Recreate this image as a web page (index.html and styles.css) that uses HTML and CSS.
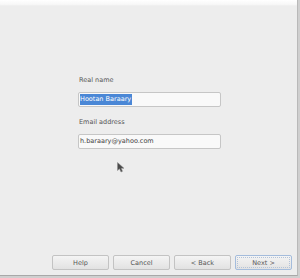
FILE: index.html
```html
<!DOCTYPE html>
<html lang="en">
<head>
  <meta charset="UTF-8" />
  <title>Account setup</title>
  <link rel="stylesheet" href="styles.css">
</head>
<body>
  <div class="window">
    <div class="titlebar"></div>

    <div class="content">
      <div class="form">
        <div class="label">Real name</div>
        <div class="field"><span class="selected">Hootan Baraary</span></div>

        <div class="label">Email address</div>
        <div class="field">h.baraary@yahoo.com</div>
      </div>
    </div>

    <div class="buttons">
      <button class="btn">Help</button>
      <button class="btn">Cancel</button>
      <button class="btn">&lt; Back</button>
      <button class="btn default"><span class="focus">Next &gt;</span></button>
    </div>
  </div>

  <!-- mouse pointer over the dialog -->
  <svg class="pointer" width="8" height="11" viewBox="0 0 8 11">
    <path d="M0.5 0.5 L0.5 8.5 L2.5 6.8 L4 10 L5.5 9.3 L4.2 6.3 L7 6.3 Z" fill="#4a4a4a" stroke="#888" stroke-width="0.5"/>
  </svg>
</body>
</html>
```

FILE: styles.css
```css
* {
  box-sizing: border-box;
  margin: 0;
  padding: 0;
}
body {
  width: 300px;
  height: 278px;
  background-color: #cfcfcf;
  font-family: 'DejaVu Sans', Verdana, sans-serif;
  color: #3c3c3c;
  position: relative;
  overflow: hidden;
}
.window {
  width: 298px;
  height: 276px;
  background-color: #ededed;
  border-right: 1px solid #b9b9b9;
  border-bottom: 1px solid #a8a8a8;
  display: flex;
  flex-direction: column;
}
.titlebar {
  height: 6px;
  background: linear-gradient(#ffffff, #f6f6f6);
  border-bottom: 1px solid #f0f0f0;
}
.content {
  flex: 1;
}
.form {
  padding: 67px 0 0 78px;
}
.label {
  height: 10px;
  line-height: 10px;
  font-size: 6.5px;
  padding: 2px 0 0 1px;
  margin-bottom: 9px;
  color: #555;
}
.field {
  width: 143px;
  height: 15px;
  border: 1px solid #c6c6c6;
  border-radius: 2px;
  background-color: #f9f9f9;
  margin-bottom: 8px;
  padding-left: 1px;
  font-size: 6.5px;
  line-height: 13px;
  color: #444;
}
.selected {
  display: inline-block;
  height: 11px;
  line-height: 11px;
  margin-top: 1px;
  vertical-align: top;
  background-color: #4a87d6;
  color: #fff;
  padding-right: 1px;
}
.buttons {
  display: flex;
  justify-content: flex-end;
  gap: 4px;
  padding: 0 5px 5px 0;
}
.btn {
  width: 57px;
  height: 15px;
  border: 1px solid #c3c3c3;
  border-radius: 2px;
  background: linear-gradient(#f4f4f4, #e2e2e2);
  font-family: 'DejaVu Sans', Verdana, sans-serif;
  font-size: 6.5px;
  color: #555;
}
.default {
  border-color: #a4bcdc;
  padding: 1px;
}
.focus {
  display: flex;
  align-items: center;
  justify-content: center;
  height: 100%;
  border: 1px dotted #b3c3d8;
}
.pointer {
  position: absolute;
  left: 117px;
  top: 162px;
}
```
